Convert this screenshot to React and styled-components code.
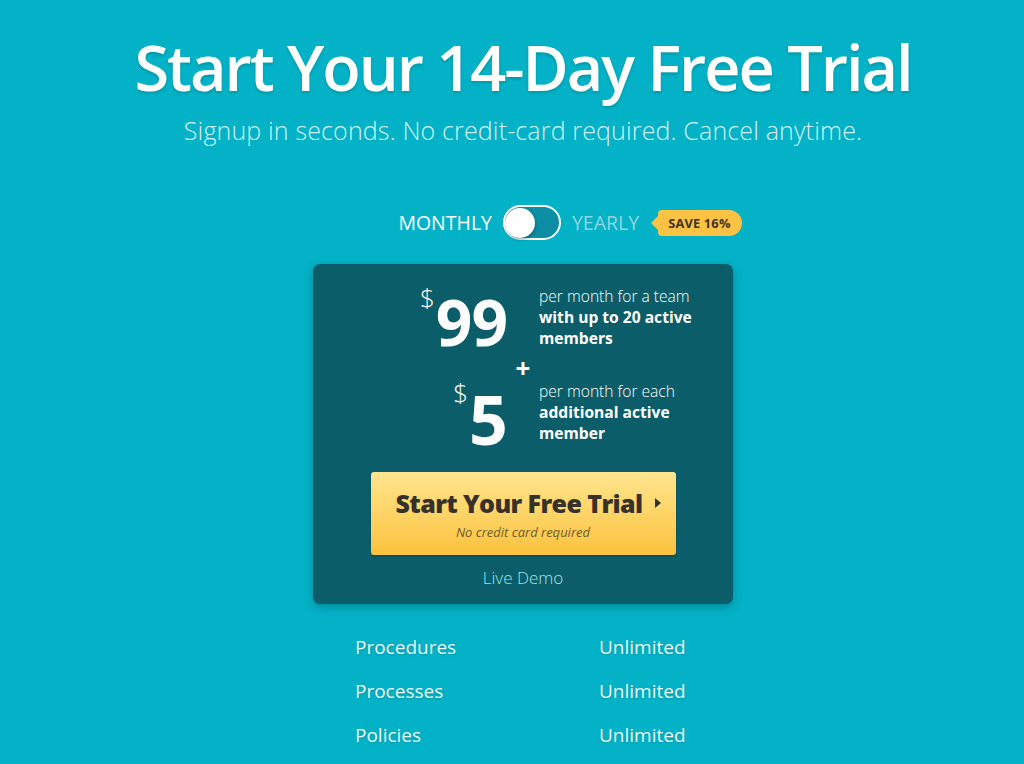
import React, { useState } from "react"
import styled, { createGlobalStyle } from "styled-components"

const GlobalStyle = createGlobalStyle`
  html, body {
    margin: 0;
    padding: 0;
    background: #03b2c6;
  }
  body {
    font-family: "Open Sans", "Noto Sans", sans-serif;
    color: #fff;
  }
`

const Page = styled.div`
  min-height: 764px;
  padding: 26px 0 0 22px;
  display: flex;
  flex-direction: column;
  align-items: center;
  overflow: hidden;
`

const Title = styled.h1`
  margin: 0;
  font-size: 63px;
  font-weight: 600;
  letter-spacing: -2px;
  line-height: 82px;
  color: #fff;
  text-shadow: 0 2px 3px rgba(0, 70, 80, 0.25);
`

const Subtitle = styled.p`
  margin: 6px 0 0;
  font-size: 25px;
  font-weight: 300;
  letter-spacing: 0.15px;
  line-height: 32px;
  color: #d2f1f5;
`

const ToggleRow = styled.div`
  margin-top: 59px;
  margin-left: 94px;
  display: flex;
  align-items: center;
  gap: 11px;
`

const ToggleLabel = styled.span`
  font-size: 19.5px;
  font-weight: 400;
  color: ${(p) => (p.$active ? "#ffffff" : "#8fd6e0")};
`

const Track = styled.button`
  position: relative;
  width: 58px;
  height: 35px;
  border-radius: 18px;
  border: 2px solid #ffffff;
  background: #0d8ea4;
  padding: 0;
  cursor: pointer;
`

const Knob = styled.span`
  position: absolute;
  top: 1px;
  left: ${(p) => (p.$on ? "24px" : "0px")};
  width: 30px;
  height: 30px;
  border-radius: 50%;
  background: #fff;
  box-shadow: 1px 2px 3px rgba(0, 50, 60, 0.35);
`

const Badge = styled.span`
  position: relative;
  margin-left: 8px;
  height: 26px;
  padding: 0 11px 0 10px;
  display: inline-flex;
  align-items: center;
  background: #fbc244;
  border-radius: 4px 13px 13px 4px;
  font-size: 12.8px;
  font-weight: 700;
  color: #3b3423;
  letter-spacing: 0.2px;

  &::before {
    content: "";
    position: absolute;
    left: -7px;
    top: 6px;
    border-top: 7px solid transparent;
    border-bottom: 7px solid transparent;
    border-right: 7px solid #fbc244;
  }
`

const Card = styled.div`
  margin-top: 24px;
  width: 420px;
  box-sizing: border-box;
  padding: 20px 0 15px;
  background: #0b5e69;
  border-radius: 7px;
  box-shadow: 0 3px 8px rgba(0, 60, 70, 0.35);
  display: flex;
  flex-direction: column;
  align-items: center;
`

const PriceRow = styled.div`
  align-self: stretch;
  display: grid;
  grid-template-columns: 194px 1fr;
  column-gap: 32px;
  align-items: start;
`

const Amount = styled.div`
  justify-self: end;
  display: flex;
  align-items: flex-start;
  line-height: 1;
`

const Dollar = styled.span`
  font-size: 26px;
  font-weight: 300;
  margin-top: ${(p) => p.$top}px;
  margin-right: 1px;
`

const Number = styled.span`
  font-size: ${(p) => p.$size}px;
  font-weight: 700;
  letter-spacing: -1px;
  margin-top: ${(p) => p.$top}px;
`

const Desc = styled.div`
  font-size: 15.6px;
  line-height: 21px;
  padding-top: 2px;
  font-weight: 300;
  max-width: 172px;

  b {
    font-weight: 700;
  }
`

const Plus = styled.div`
  font-size: 26px;
  font-weight: 700;
  line-height: 20px;
  height: 20px;
  margin: 4px 0 1px;
`

const TrialButton = styled.button`
  margin-top: 19px;
  width: 305px;
  height: 83px;
  border: none;
  border-radius: 3px;
  background: linear-gradient(to bottom, #ffe58f 0%, #ffd66a 45%, #fbc23e 100%);
  box-shadow: 0 1px 2px rgba(0, 0, 0, 0.25);
  display: flex;
  flex-direction: column;
  align-items: center;
  justify-content: center;
  gap: 3px;
  cursor: pointer;
  font-family: inherit;
`

const ButtonTitle = styled.span`
  display: flex;
  align-items: center;
  gap: 12px;
  font-size: 25px;
  font-weight: 800;
  color: #363229;
  letter-spacing: -0.6px;
  padding-left: 10px;
`

const Caret = styled.span`
  width: 0;
  height: 0;
  border-top: 5px solid transparent;
  border-bottom: 5px solid transparent;
  border-left: 6px solid #363229;
`

const ButtonNote = styled.span`
  font-size: 13px;
  font-style: italic;
  color: #6c5b2c;
`

const DemoLink = styled.a`
  margin-top: 11px;
  font-size: 17px;
  font-weight: 300;
  color: #a5e1e8;
  text-decoration: none;
  cursor: pointer;
`

const Features = styled.div`
  margin-top: 30px;
  width: 340px;
  display: grid;
  grid-template-columns: 244px 1fr;
  row-gap: 17px;
  margin-left: 4px;
`

const FeatureCell = styled.span`
  font-size: 19px;
  line-height: 27px;
  color: #eefafb;
  text-shadow: 0 1px 2px rgba(0, 70, 80, 0.25);
`

const features = ["Procedures", "Processes", "Policies"]

export default function App() {
  const [yearly, setYearly] = useState(false)

  return (
    <>
      <GlobalStyle />
      <Page>
        <Title>Start Your 14-Day Free Trial</Title>
        <Subtitle>Signup in seconds. No credit-card required. Cancel anytime.</Subtitle>

        <ToggleRow>
          <ToggleLabel $active={!yearly}>MONTHLY</ToggleLabel>
          <Track onClick={() => setYearly(!yearly)} aria-label="Billing period">
            <Knob $on={yearly} />
          </Track>
          <ToggleLabel $active={yearly}>YEARLY</ToggleLabel>
          <Badge>SAVE 16%</Badge>
        </ToggleRow>

        <Card>
          <PriceRow>
            <Amount>
              <Dollar $top={0}>$</Dollar>
              <Number $size={64} $top={6}>99</Number>
            </Amount>
            <Desc>
              per month for a team
              <br />
              <b>with up to 20 active members</b>
            </Desc>
          </PriceRow>
          <Plus>+</Plus>
          <PriceRow>
            <Amount>
              <Dollar $top={0}>$</Dollar>
              <Number $size={68} $top={6}>5</Number>
            </Amount>
            <Desc>
              per month for each
              <br />
              <b>additional active member</b>
            </Desc>
          </PriceRow>

          <TrialButton>
            <ButtonTitle>
              Start Your Free Trial <Caret />
            </ButtonTitle>
            <ButtonNote>No credit card required</ButtonNote>
          </TrialButton>
          <DemoLink>Live Demo</DemoLink>
        </Card>

        <Features>
          {features.map((f) => (
            <React.Fragment key={f}>
              <FeatureCell>{f}</FeatureCell>
              <FeatureCell>Unlimited</FeatureCell>
            </React.Fragment>
          ))}
        </Features>
      </Page>
    </>
  )
}
